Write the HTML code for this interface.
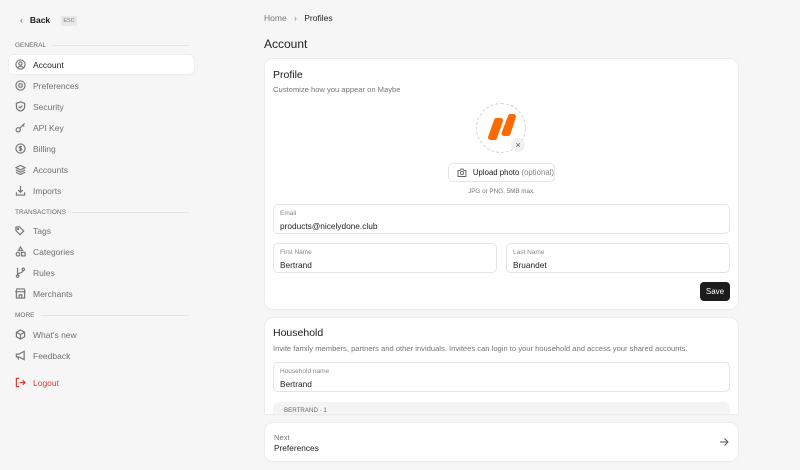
<!DOCTYPE html>
<html><head><style>
*{box-sizing:border-box;margin:0;padding:0}
body{width:800px;height:470px;background:#f6f6f6;font-family:"Liberation Sans",sans-serif;color:#1a1a1a;position:relative;overflow:hidden;font-size:8px}
.a{position:absolute}
.nav{left:9px;width:185px;height:19px;display:flex;align-items:center;padding-left:6px;color:#6f6f6f;font-size:8.5px}
.nav svg{width:11px;height:11px;margin-right:7px;stroke:#777;fill:none;stroke-width:1.3}
.sec{left:15px;font-size:6.5px;color:#666;display:flex;align-items:center;width:174px}
.sec:after{content:"";flex:1;height:1px;background:#e6e6e6;margin-left:6px}
.card{background:#fff;border-radius:8px;box-shadow:0 0 0 1px #ececec,0 1px 2px rgba(0,0,0,.04)}
.field{background:#fff;border:1px solid #e4e4e4;border-radius:5px;padding:5px 6px}
.field .l{font-size:6.5px;color:#888}
.field .v{font-size:8.3px;color:#222;margin-top:4px}
</style></head><body>
<div class="a" style="left:20px;top:15px;font-size:8.5px;font-weight:bold;display:flex;align-items:center"><span style="font-weight:normal;color:#555;margin-right:7px">&#8249;</span>Back</div>
<div class="a" style="left:61px;top:16px;width:16px;height:10px;background:#e8e8e8;border-radius:2px;font-size:5.5px;color:#777;text-align:center;line-height:10px">ESC</div>

<div class="a sec" style="top:42px">GENERAL</div>
<div class="a nav" style="top:55px;background:#fff;border-radius:5px;box-shadow:0 0 0 1px #eee,0 1px 2px rgba(0,0,0,.05);color:#222"><svg viewBox="0 0 12 12"><circle cx="6" cy="6" r="5"/><circle cx="6" cy="5" r="1.8"/><path d="M3 9.5c1.5-2 4.5-2 6 0"/></svg>Account</div>
<div class="a nav" style="top:76px"><svg viewBox="0 0 12 12"><circle cx="6" cy="6" r="5"/><circle cx="6" cy="6" r="2"/></svg>Preferences</div>
<div class="a nav" style="top:97px"><svg viewBox="0 0 12 12"><path d="M6 1l4.5 1.5v3.5c0 3-2.5 4.5-4.5 5-2-.5-4.5-2-4.5-5V2.5z"/><path d="M4 6l1.5 1.5L8 5"/></svg>Security</div>
<div class="a nav" style="top:118px"><svg viewBox="0 0 12 12"><circle cx="3.5" cy="8.5" r="2.3"/><path d="M5.2 6.8L10.5 1.5M8.5 3.5l1.5 1.5"/></svg>API Key</div>
<div class="a nav" style="top:139px"><svg viewBox="0 0 12 12"><circle cx="6" cy="6" r="5"/><path d="M7.5 4.3C7 3.7 5 3.5 4.7 4.6c-.4 1.5 3 .9 2.7 2.6C7.1 8.4 5 8.2 4.4 7.6M6 2.8v6.4"/></svg>Billing</div>
<div class="a nav" style="top:160px"><svg viewBox="0 0 12 12"><path d="M6 1.5l5 2.5-5 2.5-5-2.5zM1 6.5l5 2.5 5-2.5M1 9l5 2.5L11 9"/></svg>Accounts</div>
<div class="a nav" style="top:181px"><svg viewBox="0 0 12 12"><path d="M6 1v7M3.5 5.5L6 8l2.5-2.5M1.5 8v3h9V8"/></svg>Imports</div>
<div class="a sec" style="top:209px">TRANSACTIONS</div>
<div class="a nav" style="top:221px"><svg viewBox="0 0 12 12"><path d="M1 2.5v3.5l4.5 4.5 4-4L5 2H1.5z"/><circle cx="3.3" cy="4.3" r=".7"/></svg>Tags</div>
<div class="a nav" style="top:242px"><svg viewBox="0 0 12 12"><path d="M6 1l2.3 4H3.7z"/><circle cx="3.3" cy="9" r="2"/><rect x="7.2" y="7" width="3.8" height="3.8"/></svg>Categories</div>
<div class="a nav" style="top:263px"><svg viewBox="0 0 12 12"><circle cx="2.8" cy="10" r="1.3"/><circle cx="9" cy="2.5" r="1.3"/><path d="M2.8 1v7.7M9 3.8c0 3-6.2 2-6.2 5"/></svg>Rules</div>
<div class="a nav" style="top:284px"><svg viewBox="0 0 12 12"><path d="M1 4l1-3h8l1 3zM1.5 4v7h9V4M4.5 11V7.5h3V11"/></svg>Merchants</div>
<div class="a sec" style="top:312px">MORE</div>
<div class="a nav" style="top:325px"><svg viewBox="0 0 12 12"><path d="M6 1l4.5 2.5v5L6 11 1.5 8.5v-5zM1.5 3.5L6 6l4.5-2.5M6 6v5"/></svg>What's new</div>
<div class="a nav" style="top:346px"><svg viewBox="0 0 12 12"><path d="M1.5 4.5h2.5l6-3v9l-6-3H1.5zM3 7.5l1 3"/></svg>Feedback</div>
<div class="a nav" style="top:373px;color:#e0392b"><svg viewBox="0 0 12 12" style="stroke:#e0392b"><path d="M4.5 1.5h-3v9h3M5 6h6M8.5 3.5L11 6 8.5 8.5"/></svg>Logout</div>

<div class="a" style="left:264px;top:13px;font-size:8.5px;color:#777">Home <span style="margin:0 5px">&#8250;</span> <span style="color:#222">Profiles</span></div>
<div class="a" style="left:264px;top:37px;font-size:12px;color:#222">Account</div>

<div class="a card" style="left:265px;top:59px;width:473px;height:250px">
 <div class="a" style="left:8px;top:10px;font-size:10.5px">Profile</div>
 <div class="a" style="left:8px;top:26px;font-size:7.6px;color:#777">Customize how you appear on Maybe</div>
 <div class="a" style="left:211px;top:44px;width:50px;height:50px;border:1px dashed #d4d4d4;border-radius:50%"></div>
 <svg class="a" style="left:221px;top:54px" width="34" height="34" viewBox="0 0 34 34" fill="#ff6a00" stroke="#ff6a00" stroke-width="5" stroke-linejoin="round"><path d="M10.5 7.5H14.5L8.5 24.5H4.5z"/><path d="M24.5 3.5H27.5L22 20.5H18z"/></svg>
 <div class="a" style="left:246px;top:79px;width:14px;height:14px;background:#f0f0f0;border-radius:50%;text-align:center;line-height:14px;font-size:9px;color:#555">×</div>
 <div class="a" style="left:183px;top:104px;width:107px;height:19px;border:1px solid #e6e6e6;border-radius:5px;font-size:7.8px;display:flex;align-items:center;padding-left:8px;white-space:nowrap"><svg width="10" height="9" viewBox="0 0 10 9" style="margin-right:6px" fill="none" stroke="#666" stroke-width="1"><path d="M1 2.5h2l1-1.5h2l1 1.5h2v6H1z"/><circle cx="5" cy="5" r="1.6"/></svg>Upload photo&nbsp;<span style="color:#888">(optional)</span></div>
 <div class="a" style="left:0;width:473px;top:129px;text-align:center;font-size:6.3px;color:#777">JPG or PNG. 5MB max.</div>
 <div class="a field" style="left:8px;top:145px;width:457px;height:30px"><div class="l">Email</div><div class="v">products@nicelydone.club</div></div>
 <div class="a field" style="left:8px;top:184px;width:224px;height:30px"><div class="l">First Name</div><div class="v">Bertrand</div></div>
 <div class="a field" style="left:241px;top:184px;width:224px;height:30px"><div class="l">Last Name</div><div class="v">Bruandet</div></div>
 <div class="a" style="left:435px;top:223px;width:30px;height:19px;background:#1c1c1c;color:#fff;border-radius:4px;font-size:8px;text-align:center;line-height:19px">Save</div>
</div>

<div class="a card" style="left:265px;top:318px;width:473px;height:96px;border-radius:8px 8px 0 0;overflow:hidden">
 <div class="a" style="left:8px;top:9px;font-size:10.5px">Household</div>
 <div class="a" style="left:8px;top:26px;font-size:7.6px;color:#777;white-space:nowrap">Invite family members, partners and other inviduals. Invitees can login to your household and access your shared accounts.</div>
 <div class="a field" style="left:8px;top:44px;width:457px;height:30px"><div class="l">Household name</div><div class="v">Bertrand</div></div>
 <div class="a" style="left:8px;top:84px;width:457px;height:20px;background:#f4f4f4;border-radius:6px;font-size:6.2px;color:#666;padding:5px 11px">BERTRAND · 1</div>
</div>

<div class="a card" style="left:265px;top:423px;width:473px;height:38px">
 <div class="a" style="left:9px;top:10px;font-size:7.6px;color:#777">Next</div>
 <div class="a" style="left:9px;top:20px;font-size:8.3px;color:#222">Preferences</div>
 <svg class="a" style="left:454px;top:14px" width="10" height="10" viewBox="0 0 10 10" fill="none" stroke="#555" stroke-width="1"><path d="M1 5h8M5.5 1.5L9 5 5.5 8.5"/></svg>
</div>
</body></html>
